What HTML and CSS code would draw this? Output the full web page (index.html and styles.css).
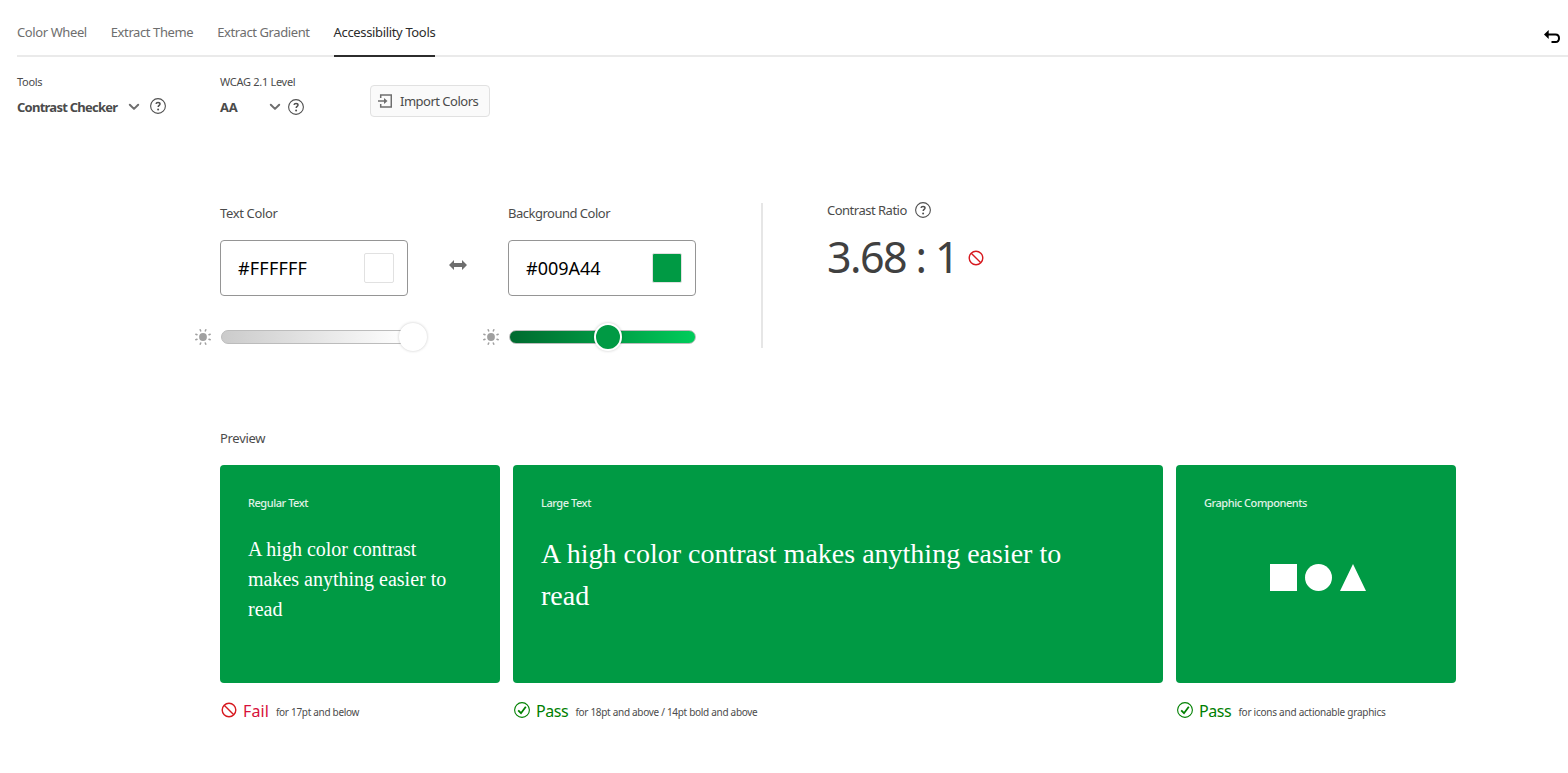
FILE: index.html
```html
<!DOCTYPE html>
<html lang="en">
<head>
<meta charset="utf-8">
<title>Contrast Checker</title>
<link rel="stylesheet" href="styles.css">
</head>
<body>
<svg class="defs" width="0" height="0" aria-hidden="true">
  <symbol id="help" viewBox="0 0 18 18"><circle cx="9" cy="9" r="7.4" fill="none" stroke="#505050" stroke-width="1.1"/><path d="M7 6.9C7.2 5.8 8 5.4 9 5.4c1.2 0 2 .6 2 1.6 0 1.4-1.8 1.5-1.8 3.1" fill="none" stroke="#505050" stroke-width="1.5"/><circle cx="9.1" cy="12.4" r="1" fill="#505050"/></symbol>
  <symbol id="chevron" viewBox="0 0 12 8"><path d="M1.8 1.8 6 5.9l4.2-4.1" fill="none" stroke="#6e6e6e" stroke-width="2" stroke-linecap="round" stroke-linejoin="round"/></symbol>
  <symbol id="sun" viewBox="0 0 16 16"><circle cx="8" cy="8" r="3.9" fill="#a0a0a0"/><path d="M14 10.300l1.200.5M10.300 14l.5 1.200M5.700 14l-.5 1.200M2 10.300l-1.200.5M2 5.700.8 5.200M5.700 2 5.200.8M10.300 2l.5-1.200M14 5.700l1.200-.5" stroke="#a0a0a0" stroke-width="1.500" stroke-linecap="round"/></symbol>
  <symbol id="fail" viewBox="0 0 16 16"><circle cx="8" cy="8" r="6.800" fill="none" stroke="#d7191f" stroke-width="1.400"/><path d="M3.200 3.200l9.600 9.600" stroke="#d7191f" stroke-width="1.400"/></symbol>
  <symbol id="pass" viewBox="0 0 16 16"><circle cx="8" cy="8" r="7.400" fill="none" stroke="#008000" stroke-width="1.100"/><path d="M4.200 8.300l2.800 2.900 4.800-6.400" fill="none" stroke="#008000" stroke-width="1.800"/></symbol>
</svg>

<header class="topbar">
  <nav class="tabs">
    <a class="tab">Color Wheel</a>
    <a class="tab">Extract Theme</a>
    <a class="tab">Extract Gradient</a>
    <a class="tab tab-active">Accessibility Tools</a>
  </nav>
  <svg class="undo" viewBox="0 0 16 14"><path d="M3 4.500h8.500c2.200 0 3.500 1.500 3.500 3.700s-1.300 3.800-3.500 3.800H7.500" fill="none" stroke="#000" stroke-width="2"/><path d="M0 4.500 4.700 0v9z" fill="#000"/></svg>
</header>

<section class="options">
  <div class="option option-tool">
    <span class="option-label">Tools</span>
    <div class="option-row"><b class="option-value">Contrast Checker</b><svg class="chevron"><use href="#chevron"/></svg><svg class="help"><use href="#help"/></svg></div>
  </div>
  <div class="option option-level">
    <span class="option-label">WCAG 2.1 Level</span>
    <div class="option-row"><b class="option-value">AA</b><svg class="chevron"><use href="#chevron"/></svg><svg class="help help-low"><use href="#help"/></svg></div>
  </div>
  <button class="import"><svg class="import-icon" viewBox="0 0 14 14"><path d="M2.700 4V1h10.600v12H2.700v-3" fill="none" stroke="#6e6e6e" stroke-width="1.500"/><path d="M0 7h7.500" stroke="#6e6e6e" stroke-width="1.500"/><path d="M6 3.900 9.500 7 6 10.100z" fill="#6e6e6e"/></svg><span>Import Colors</span></button>
</section>

<main class="checker">
  <section class="pickers">
    <div class="picker">
      <h2 class="label">Text Color</h2>
      <div class="field"><span class="hex hex-text">#FFFFFF</span><i class="swatch"></i></div>
      <div class="slider"><svg class="sun"><use href="#sun"/></svg><div class="track track-text"><i class="knob knob-text"></i></div></div>
    </div>
    <svg class="swap" viewBox="0 0 18 10"><path d="M0 5 5 0v3h8V0l5 5-5 5V7H5v3z" fill="#6e6e6e"/></svg>
    <div class="picker">
      <h2 class="label label-bg">Background Color</h2>
      <div class="field"><span class="hex">#009A44</span><i class="swatch swatch-bg"></i></div>
      <div class="slider"><svg class="sun"><use href="#sun"/></svg><div class="track track-bg"><i class="knob knob-bg"></i></div></div>
    </div>
    <div class="ratio">
      <div class="ratio-head"><h2 class="label label-ratio">Contrast Ratio</h2><svg class="help"><use href="#help"/></svg></div>
      <div class="ratio-row"><span class="ratio-value">3.68 : 1</span><svg class="status-icon"><use href="#fail"/></svg></div>
    </div>
  </section>

  <h2 class="label preview-label">Preview</h2>
  <section class="previews">
    <article>
      <div class="card"><h3 class="card-title">Regular Text</h3><p class="sample sample-regular">A high color contrast makes anything easier to read</p></div>
      <div class="result"><svg class="status-icon"><use href="#fail"/></svg><span class="verdict verdict-fail">Fail</span><span class="note">for 17pt and below</span></div>
    </article>
    <article>
      <div class="card"><h3 class="card-title">Large Text</h3><p class="sample sample-large">A high color contrast makes anything easier to read</p></div>
      <div class="result"><svg class="status-icon"><use href="#pass"/></svg><span class="verdict">Pass</span><span class="note">for 18pt and above / 14pt bold and above</span></div>
    </article>
    <article>
      <div class="card"><h3 class="card-title">Graphic Components</h3><svg class="shapes" viewBox="0 0 96 27"><path d="M0 0h27v27H0zM83 0l13 27H70z" fill="#fff"/><circle cx="48.500" cy="13.500" r="13.500" fill="#fff"/></svg></div>
      <div class="result"><svg class="status-icon"><use href="#pass"/></svg><span class="verdict">Pass</span><span class="note note-graphic">for icons and actionable graphics</span></div>
    </article>
  </section>
</main>
</body>
</html>
```
FILE: styles.css
```css
* { box-sizing: border-box; }
body { margin: 0; background: #fff; color: #4b4b4b; font: 13px/20px "Noto Sans", sans-serif; overflow: hidden; white-space: nowrap; }
h2, h3, p { margin: 0; font-weight: 400; }
svg { display: block; flex: none; }
.defs { position: absolute; }

.topbar { display: flex; justify-content: space-between; height: 57px; margin-left: 17px; padding-right: 8px; border-bottom: 2px solid #eaeaea; }
.tabs { display: flex; gap: 24px; height: 57px; }
.tab { height: 57px; padding-top: 22px; color: #6e6e6e; letter-spacing: -0.4px; }
.tab-active { color: #2c2c2c; border-bottom: 2px solid #2c2c2c; letter-spacing: -0.35px; }
.undo { width: 16px; height: 14px; margin-top: 30px; }

.options { display: flex; height: 60px; padding: 15px 0 0 17px; }
.option { padding-top: 1px; }
.option-tool { width: 203px; }
.option-level { width: 150px; }
.option-label { display: block; height: 18px; font-size: 11px; line-height: 18px; letter-spacing: -0.3px; }
.option-row { display: flex; align-items: center; height: 32px; }
.option-value { letter-spacing: -0.75px; }
.option-tool .option-value { width: 111px; }
.option-level .option-value { width: 49px; letter-spacing: -0.3px; }
.chevron { width: 12px; height: 8px; }
.help { width: 18px; height: 18px; }
.option .help { margin-left: 9px; margin-bottom: 2px; }
.option .help-low { margin-left: 6px; margin-bottom: 0; }
.import { display: flex; align-items: center; gap: 8px; width: 120px; height: 32px; margin-top: 13px; padding: 0 7px; border: 1px solid #e1e1e1; border-radius: 4px; background: #fafafa; color: #4b4b4b; font: inherit; letter-spacing: -0.5px; }
.import-icon { width: 14px; height: 14px; }

.checker { padding: 86px 0 0 220px; }
.pickers { display: flex; height: 145px; }
.picker { width: 188px; }
.label { font-size: 13px; line-height: 20px; letter-spacing: -0.35px; }
.label-bg, .label-ratio { letter-spacing: -0.5px; }
.field { display: flex; align-items: center; justify-content: space-between; height: 56px; margin-top: 17px; padding: 0 13px 0 17px; border: 1px solid #959595; border-radius: 4px; }
.hex { color: #000; font-size: 18px; letter-spacing: 0; }
.hex-text { letter-spacing: 0.2px; }
.swatch { width: 30px; height: 30px; border: 1px solid #e1e1e1; border-radius: 2px; }
.swatch-bg { background: #009a44; }
.slider { display: flex; align-items: center; gap: 10px; height: 16px; margin: 33px 0 0 -25px; }
.sun { width: 16px; height: 16px; }
.track { flex: none; width: 187px; height: 14px; border: 1px solid #bcbcbc; border-radius: 7px; }
.track-text { background: linear-gradient(90deg, #cbcbcb, #fff); }
.track-bg { background: linear-gradient(90deg, #006a2f, #009a44 52%, #00cd5b); }
.knob { display: block; width: 28px; height: 28px; margin-top: -8px; border-radius: 50%; border: 2px solid #fff; box-shadow: 0 0 3px rgba(0, 0, 0, .22); }
.knob-text { margin-left: 177px; background: #fff; }
.knob-bg { margin-left: 84px; background: #009a44; }
.swap { width: 18px; height: 10px; margin: 57px 41px 0; }
.ratio { margin-left: 65px; padding-left: 64px; border-left: 2px solid #e6e6e6; }
.ratio-head { display: flex; align-items: center; gap: 7px; height: 14px; }
.ratio-row { display: flex; align-items: center; gap: 10px; height: 60px; margin-top: 11px; }
.ratio-value { padding-bottom: 3px; color: #404040; font-size: 43px; line-height: 57px; letter-spacing: -1.6px; }
.status-icon { width: 16px; height: 16px; }

.preview-label { margin-top: 80px; letter-spacing: -0.3px; }
.previews { display: grid; grid-template-columns: 280px 650px 280px; gap: 13px; margin-top: 17px; }
.card { height: 218px; padding: 28px; border-radius: 4px; background: #009a44; color: #fff; }
.card-title { color: #e0f2e7; font-size: 11px; font-weight: 500; line-height: 20px; letter-spacing: -0.45px; }
.sample { font-family: "Liberation Serif", serif; white-space: normal; }
.sample-regular { margin-top: 21px; font-size: 20px; line-height: 30px; }
.sample-large { max-width: 560px; margin-top: 20px; font-size: 28px; line-height: 42px; }
.shapes { width: 96px; height: 27px; margin: 51px 0 0 66px; }
.result { display: flex; align-items: center; height: 20px; margin-top: 17px; padding-left: 1px; }
.verdict { margin: 1px 7px 0 6px; color: #008000; font-size: 16px; letter-spacing: -0.4px; }
.verdict-fail { color: #d7103a; letter-spacing: 0.1px; }
.note { padding-top: 3px; font-size: 10px; letter-spacing: -0.3px; }
.note-graphic { letter-spacing: -0.25px; }
```
